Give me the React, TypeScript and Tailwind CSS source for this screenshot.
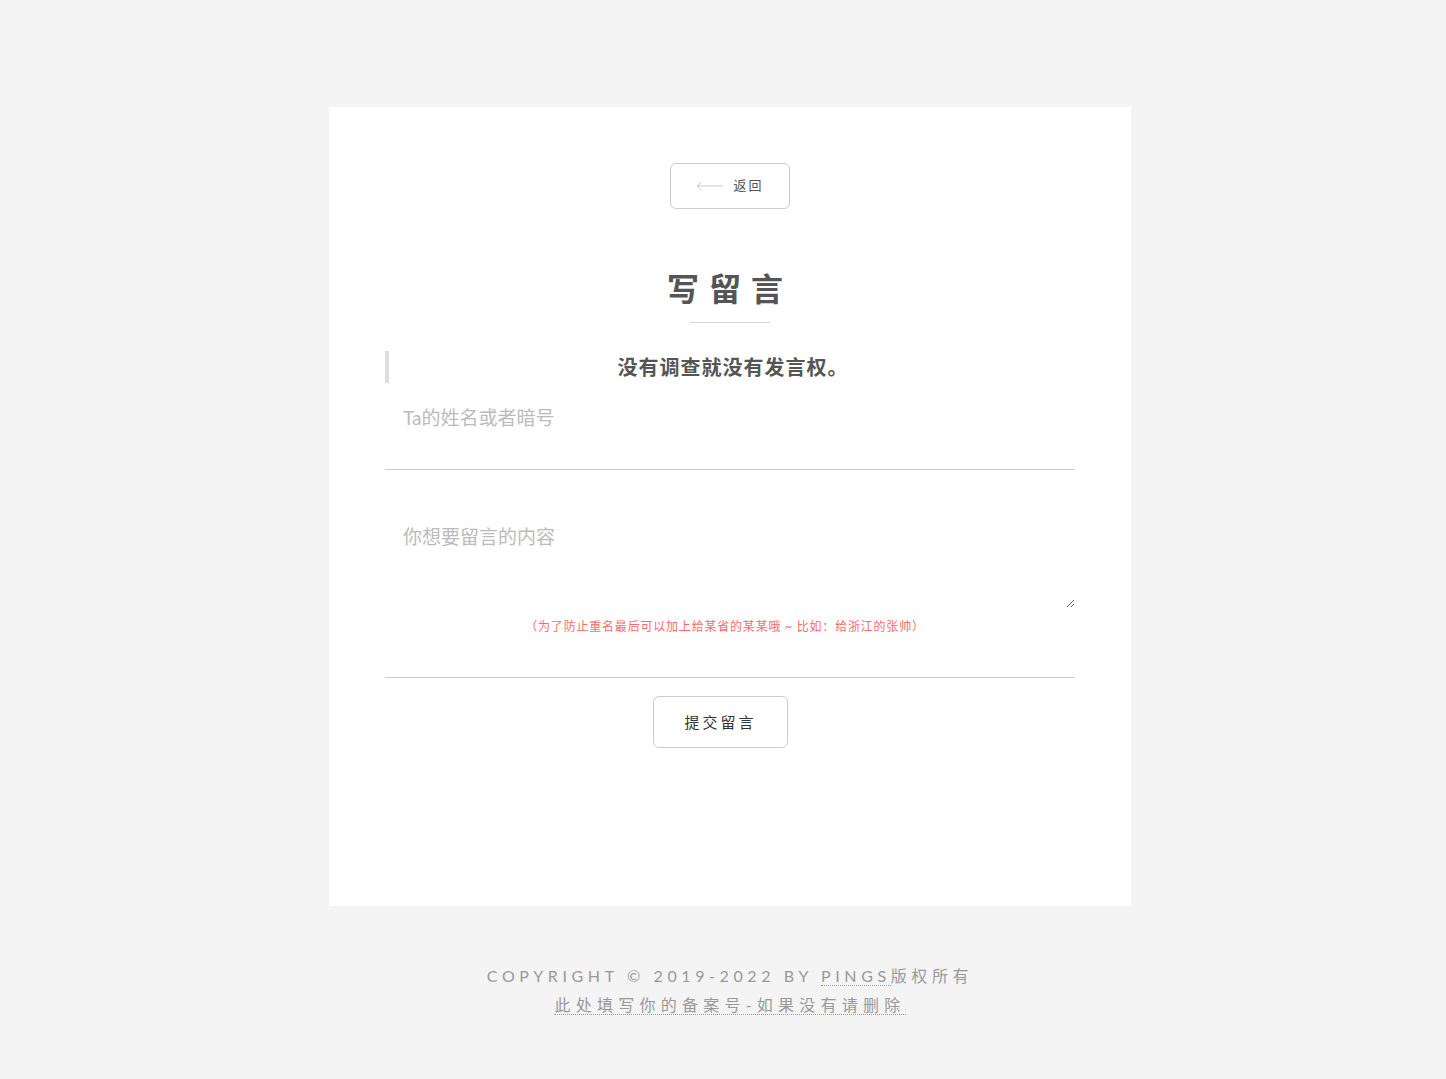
import { useState } from 'react'

const cjk = "font-['Lato','Noto_Sans_CJK_SC',sans-serif]"

export default function App() {
  const [name, setName] = useState('')
  const [content, setContent] = useState('')

  return (
    <div className={`min-h-[1079px] bg-[#f4f4f4] pt-[107px] pb-[40px] ${cjk}`}>
      <div className="flex justify-center pl-[14px]">
        <div className="w-[802px] h-[799px] bg-white px-[56px] pt-[56px]">
          {/* 返回 */}
          <div className="flex justify-center">
            <button
              type="button"
              className="flex h-[46px] w-[120px] items-center justify-center gap-[9px] rounded-[6px] border border-[#cccccc] bg-white text-[13px] tracking-[2px] text-[#555]"
            >
              <svg width="28" height="10" viewBox="0 0 28 10" fill="none" stroke="#c8c8c8" strokeWidth="1">
                <path d="M27 5H1M5.5 0.8L1 5l4.5 4.2" />
              </svg>
              <span>返回</span>
            </button>
          </div>

          {/* 标题 */}
          <h1 className="mt-[62px] text-center text-[32px] font-bold leading-[36px] tracking-[10px] text-[#555]">写留言</h1>
          <div className="mx-auto mt-[15px] h-px w-[80px] bg-[#d6d6d6]" />

          <blockquote className="mt-[28px] flex h-[32px] items-center justify-center border-l-[4px] border-[#dddddd] pl-[2px] text-[20px] font-bold tracking-[1px] text-[#555]">
            没有调查就没有发言权。
          </blockquote>

          <div className="border-b border-[#cccccc]">
            <input
              value={name}
              onChange={(e) => setName(e.target.value)}
              placeholder="Ta的姓名或者暗号"
              className="mt-[10px] mb-[28px] h-[48px] w-full px-[18px] text-[19px] text-[#555] outline-none placeholder:text-[#bbbbbb]"
            />
          </div>

          <div className="border-b border-[#cccccc] pt-[40px] pb-[41px]">
            <textarea
              value={content}
              onChange={(e) => setContent(e.target.value)}
              placeholder="你想要留言的内容"
              className="block h-[98px] w-full px-[18px] pt-[15px] text-[19px] leading-[24px] text-[#555] outline-none placeholder:text-[#bbbbbb]"
            />
            <p className="mt-[10px] pr-[10px] text-center text-[12px] leading-[18px] tracking-[0.8px] text-[#ff6b6b]">
              （为了防止重名最后可以加上给某省的某某哦 ~ 比如：给浙江的张帅）
            </p>
          </div>

          <button
            type="button"
            className="ml-[268px] mt-[18px] h-[52px] w-[135px] rounded-[6px] border border-[#cccccc] bg-white text-[15px] tracking-[3px] text-[#333]"
          >
            提交留言
          </button>
        </div>
      </div>

      <footer className="mt-[55px] pl-[14px] text-center text-[#999]">
        <p className="text-[16px] leading-[29px] tracking-[4.6px]">
          COPYRIGHT © 2019-2022 BY{' '}
          <a className="border-b border-dotted border-[#999] text-[#999]">PINGS</a>版权所有
        </p>
        <p className="text-[16px] leading-[29px] tracking-[5.25px]">
          <a className="border-b border-dotted border-[#999] text-[#999]">此处填写你的备案号-如果没有请删除</a>
        </p>
      </footer>
    </div>
  )
}
